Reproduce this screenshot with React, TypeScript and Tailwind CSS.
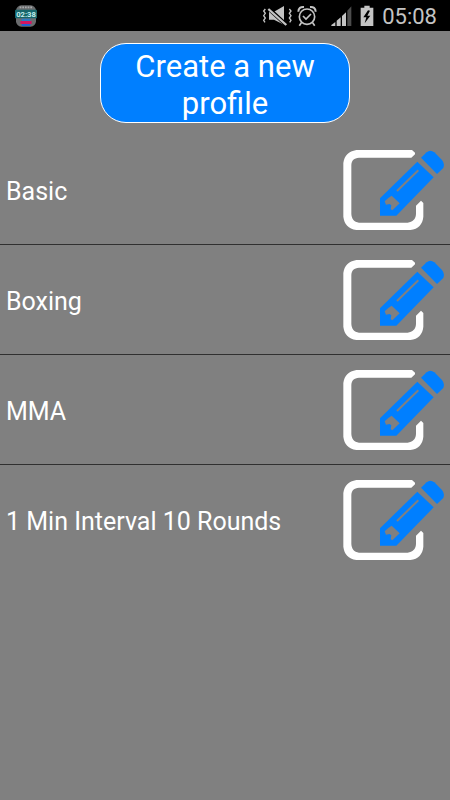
const profiles = ["Basic", "Boxing", "MMA", "1 Min Interval 10 Rounds"];

function TimerAppIcon() {
  return (
    <svg viewBox="0 0 66 66" className="size-[22px]" aria-hidden="true">
      <rect x="3" y="1" width="60" height="64" rx="16" fill="#6a6c6e" />
      <path d="M14 7H52" stroke="#a9abad" strokeWidth="5" strokeDasharray="5 3" />
      <rect x="0" y="14" width="66" height="26" rx="2" fill="#17666b" />
      <text x="33" y="35" textAnchor="middle" fontSize="23" fontWeight="700" fill="#c3eeee" fontFamily="Roboto, sans-serif">
        02:38
      </text>
      <rect x="20" y="41" width="26" height="7" fill="#2c7ac4" />
      <rect x="16" y="48" width="34" height="9" rx="2" fill="#d3145f" />
      <rect x="20" y="57" width="26" height="6" fill="#1f5fd0" />
    </svg>
  );
}

function MutedIcon() {
  return (
    <svg viewBox="24 12 93 66" className="h-[22px] w-[31px]" fill="none" stroke="#c4c4c4" aria-hidden="true">
      <path d="M45 32H60L90 15V71L60 56H45Z" fill="#c4c4c4" stroke="none" />
      <path d="M42 21L98 73" stroke="#000" strokeWidth="12" />
      <path d="M43 24L97 72" strokeWidth="7" />
      <path d="M34 24l-5 6 5 7-5 7 5 7-5 7 4 6" strokeWidth="4" />
      <path d="M106 24l5 6-5 7 5 7-5 7 5 7-4 6" strokeWidth="4" />
    </svg>
  );
}

function AlarmIcon() {
  return (
    <svg viewBox="130 12 60 66" className="h-[22px] w-5" fill="none" stroke="#c4c4c4" aria-hidden="true">
      <circle cx="160" cy="47" r="23" strokeWidth="5" />
      <path d="M134 32C134 21 141 17 151 18M186 32C186 21 179 17 169 18" strokeWidth="6" />
      <path d="M143 65L137 74M177 65L183 74" strokeWidth="5" />
      <path d="M148 45L157 54L172 39" strokeWidth="5" />
    </svg>
  );
}

function SignalIcon() {
  return (
    <svg viewBox="230 12 63 66" className="h-[22px] w-[21px]" aria-hidden="true">
      <path d="M231 75V72L243 63V75Z" fill="#c4c4c4" />
      <path d="M247 75V59L259 49V75Z" fill="#c4c4c4" />
      <path d="M263 75V45L275 34V75Z" fill="#c4c4c4" />
      <path d="M279 75V29L291 16V75Z" fill="#4c4c4c" />
    </svg>
  );
}

function BatteryIcon() {
  return (
    <svg viewBox="31 12 42 66" className="h-[22px] w-3.5" aria-hidden="true">
      <path d="M44 14H60V20H71V75H33V20H44Z" fill="#c4c4c4" />
      <path d="M55 28L41 49H50L45 67L62 44H53L61 29Z" fill="#000" />
    </svg>
  );
}

function EditIcon() {
  return (
    <svg viewBox="24 30 306 240" className="h-20 w-[102px]" aria-hidden="true">
      <path
        d="M64 30H231L240 38V43L229 53H72C57 54 50 61 49 75V222C50 237 57 246 72 248H218C233 246 242 238 243 222V197L258 182L265 189V230C263 253 250 267 226 270H64C40 266 28 253 25 230V69C28 47 41 34 64 30Z"
        fill="#fff"
      />
      <path d="M247 65L296 112L184 227H135V175Z" fill="#007fff" />
      <path d="M258 53L275 37Q286 28 298 37L321 60Q330 70 325 84L306 102Z" fill="#007fff" />
      <path d="M250 91L186 153" stroke="#808080" strokeWidth="6" />
      <path d="M170 167L194 190L172 211L167 207L169 196L164 192L153 194L149 184L160 174Z" fill="#808080" />
    </svg>
  );
}

export default function App() {
  return (
    <div className="min-h-screen bg-[#808080] font-['Roboto',sans-serif] text-white">
      <header className="flex h-[31px] items-center justify-between bg-black pr-[13px] pl-[15px]">
        <TimerAppIcon />
        <div className="flex items-center">
          <MutedIcon />
          <span className="ml-1 flex"><AlarmIcon /></span>
          <span className="ml-3.5 flex"><SignalIcon /></span>
          <span className="ml-2 flex"><BatteryIcon /></span>
          <time className="ml-2 pt-0.5 text-[22px] leading-7 text-[#c4c4c4]">05:08</time>
        </div>
      </header>
      <main>
        <div className="flex justify-center pt-3 pb-3">
          <button
            type="button"
            className="h-20 w-[250px] rounded-[26px] border border-white bg-[#007fff] px-6 pt-1 text-[31px] leading-[37px]"
          >
            Create a new profile
          </button>
        </div>
        <ul>
          {profiles.map((name) => (
            <li
              key={name}
              className="flex h-[110px] items-center justify-between border-b border-[#303030] pr-[5px] pl-1.5 last:border-transparent"
            >
              <span className="pt-1 text-[25px] leading-8">{name}</span>
              <button type="button" aria-label={`Edit ${name}`}>
                <EditIcon />
              </button>
            </li>
          ))}
        </ul>
      </main>
    </div>
  );
}
